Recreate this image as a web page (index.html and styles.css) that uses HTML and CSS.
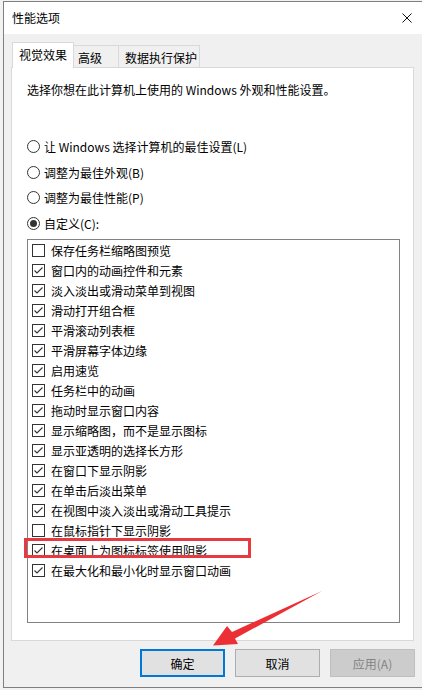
FILE: index.html
```html
<!DOCTYPE html>
<html lang="zh-CN">
<head>
    <meta charset="UTF-8">
    <meta name="viewport" content="width=device-width, initial-scale=1.0">
    <title>性能选项</title>
    <link rel="stylesheet" href="styles.css">
</head>
<body>
    <div class="dialog">
        <div class="titlebar">
            <span class="title">性能选项</span>
            <span class="close">
                <svg width="10" height="10" viewBox="0 0 10 10"><path d="M0.5 0.5L9.5 9.5M9.5 0.5L0.5 9.5" stroke="#111" stroke-width="1" fill="none"/></svg>
            </span>
        </div>

        <div class="tabs">
            <div class="tab active">视觉效果</div>
            <div class="tab tab-adv">高级</div>
            <div class="tab tab-dep">数据执行保护</div>
        </div>

        <div class="panel">
            <p class="intro">选择你想在此计算机上使用的 Windows 外观和性能设置。</p>

            <div class="radios">
                <div class="radio-row"><span class="radio"></span>让 Windows 选择计算机的最佳设置(L)</div>
                <div class="radio-row"><span class="radio"></span>调整为最佳外观(B)</div>
                <div class="radio-row"><span class="radio"></span>调整为最佳性能(P)</div>
                <div class="radio-row"><span class="radio checked"></span>自定义(C):</div>
            </div>

            <div class="listbox">
                <div class="item"><span class="box"></span>保存任务栏缩略图预览</div>
                <div class="item"><span class="box on"></span>窗口内的动画控件和元素</div>
                <div class="item"><span class="box on"></span>淡入淡出或滑动菜单到视图</div>
                <div class="item"><span class="box on"></span>滑动打开组合框</div>
                <div class="item"><span class="box on"></span>平滑滚动列表框</div>
                <div class="item"><span class="box on"></span>平滑屏幕字体边缘</div>
                <div class="item"><span class="box on"></span>启用速览</div>
                <div class="item"><span class="box on"></span>任务栏中的动画</div>
                <div class="item"><span class="box on"></span>拖动时显示窗口内容</div>
                <div class="item"><span class="box on"></span>显示缩略图，而不是显示图标</div>
                <div class="item"><span class="box on"></span>显示亚透明的选择长方形</div>
                <div class="item"><span class="box on"></span>在窗口下显示阴影</div>
                <div class="item"><span class="box on"></span>在单击后淡出菜单</div>
                <div class="item"><span class="box on"></span>在视图中淡入淡出或滑动工具提示</div>
                <div class="item"><span class="box"></span>在鼠标指针下显示阴影</div>
                <div class="item"><span class="box on"></span>在桌面上为图标标签使用阴影</div>
                <div class="item"><span class="box on"></span>在最大化和最小化时显示窗口动画</div>
            </div>
        </div>

        <div class="buttons">
            <button class="btn default">确定</button>
            <button class="btn">取消</button>
            <button class="btn disabled">应用(A)</button>
        </div>
    </div>

    <!-- annotation overlays -->
    <div class="highlight"></div>
    <svg class="arrow" width="422" height="690" viewBox="0 0 422 690">
        <polygon points="322,591 235,638.5 238,644 213,645.5 227,626 232,632" fill="#ec2f35"/>
    </svg>
</body>
</html>
```

FILE: styles.css
```css
body {
    margin: 0;
    height: 690px;
    overflow: hidden;
    background-color: #f2f2f2;
    font-family: "Noto Sans CJK SC", "Noto Sans", sans-serif;
    font-size: 12px;
    color: #000;
    position: relative;
}
.dialog {
    margin: 1px 0 0 3px;
    width: 428px;
    height: 687px;
    box-sizing: border-box;
    border: 1px solid #7f7f7f;
    background-color: #f0f0f0;
    display: flex;
    flex-direction: column;
}
.titlebar {
    height: 32px;
    flex-shrink: 0;
    background-color: #fff;
    display: flex;
    align-items: center;
    padding-left: 8px;
}
.title {
    line-height: 16px;
}
.close {
    margin-left: auto;
    width: 46px;
    height: 32px;
    display: flex;
    align-items: center;
    justify-content: center;
}
.tabs {
    display: flex;
    align-items: flex-end;
    padding: 8px 0 0 8px;
    margin-bottom: -1px;
    position: relative;
    z-index: 1;
}
.tab {
    box-sizing: border-box;
    height: 22px;
    margin-bottom: 1px;
    border: 1px solid #d9d9d9;
    border-bottom: none;
    border-left: none;
    background-color: #f0f0f0;
    line-height: 16px;
    padding-top: 4px;
}
.tab.active {
    height: 26px;
    margin-bottom: 0;
    border-left: 1px solid #d9d9d9;
    background-color: #fff;
    padding: 4px 6px 0 6px;
}
.tab-adv {
    padding-left: 4px;
    padding-right: 16px;
}
.tab-dep {
    padding-left: 6px;
    padding-right: 2px;
}
.panel {
    margin-left: 7px;
    width: 403px;
    height: 574px;
    flex-shrink: 0;
    box-sizing: border-box;
    border: 1px solid #d9d9d9;
    background-color: #fff;
    padding-left: 15px;
}
.intro {
    margin: 12px 0 0 0;
    line-height: 20px;
}
.radios {
    margin-top: 34px;
}
.radio-row {
    height: 25.5px;
    display: flex;
    align-items: center;
    gap: 4px;
}
.radio {
    width: 13px;
    height: 13px;
    box-sizing: border-box;
    border: 1px solid #333;
    border-radius: 50%;
    display: flex;
    align-items: center;
    justify-content: center;
    flex-shrink: 0;
}
.radio.checked::after {
    content: '';
    width: 7px;
    height: 7px;
    border-radius: 50%;
    background-color: #333;
}
.listbox {
    margin-top: 3px;
    width: 373px;
    height: 384px;
    box-sizing: border-box;
    border: 1px solid #828282;
    padding-left: 4px;
}
.item {
    height: 20px;
    display: flex;
    align-items: center;
    gap: 6px;
}
.box {
    width: 13px;
    height: 13px;
    box-sizing: border-box;
    border: 1px solid #333;
    flex-shrink: 0;
    background-color: #fff;
}
.box.on {
    background-image: url("data:image/svg+xml,%3Csvg xmlns='http://www.w3.org/2000/svg' width='11' height='11' viewBox='0 0 11 11'%3E%3Cpath d='M1.5 5.5L4 8L9.5 2.5' stroke='%23333' stroke-width='1.1' fill='none'/%3E%3C/svg%3E");
    background-repeat: no-repeat;
}
.buttons {
    display: flex;
    justify-content: flex-end;
    gap: 10px;
    margin-top: 8px;
    padding-right: 15px;
}
.btn {
    width: 85px;
    height: 28px;
    box-sizing: border-box;
    border: 1px solid #adadad;
    background-color: #e1e1e1;
    font-family: inherit;
    font-size: 12px;
    color: #000;
    padding: 0;
}
.btn.default {
    border: 2px solid #0078d7;
}
.btn.disabled {
    background-color: #cccccc;
    border-color: #bfbfbf;
    color: #838383;
}
.highlight {
    position: absolute;
    left: 24px;
    top: 538px;
    width: 227px;
    height: 20px;
    box-sizing: border-box;
    border: 3px solid #e63a40;
}
.arrow {
    position: absolute;
    left: 0;
    top: 0;
}
```
